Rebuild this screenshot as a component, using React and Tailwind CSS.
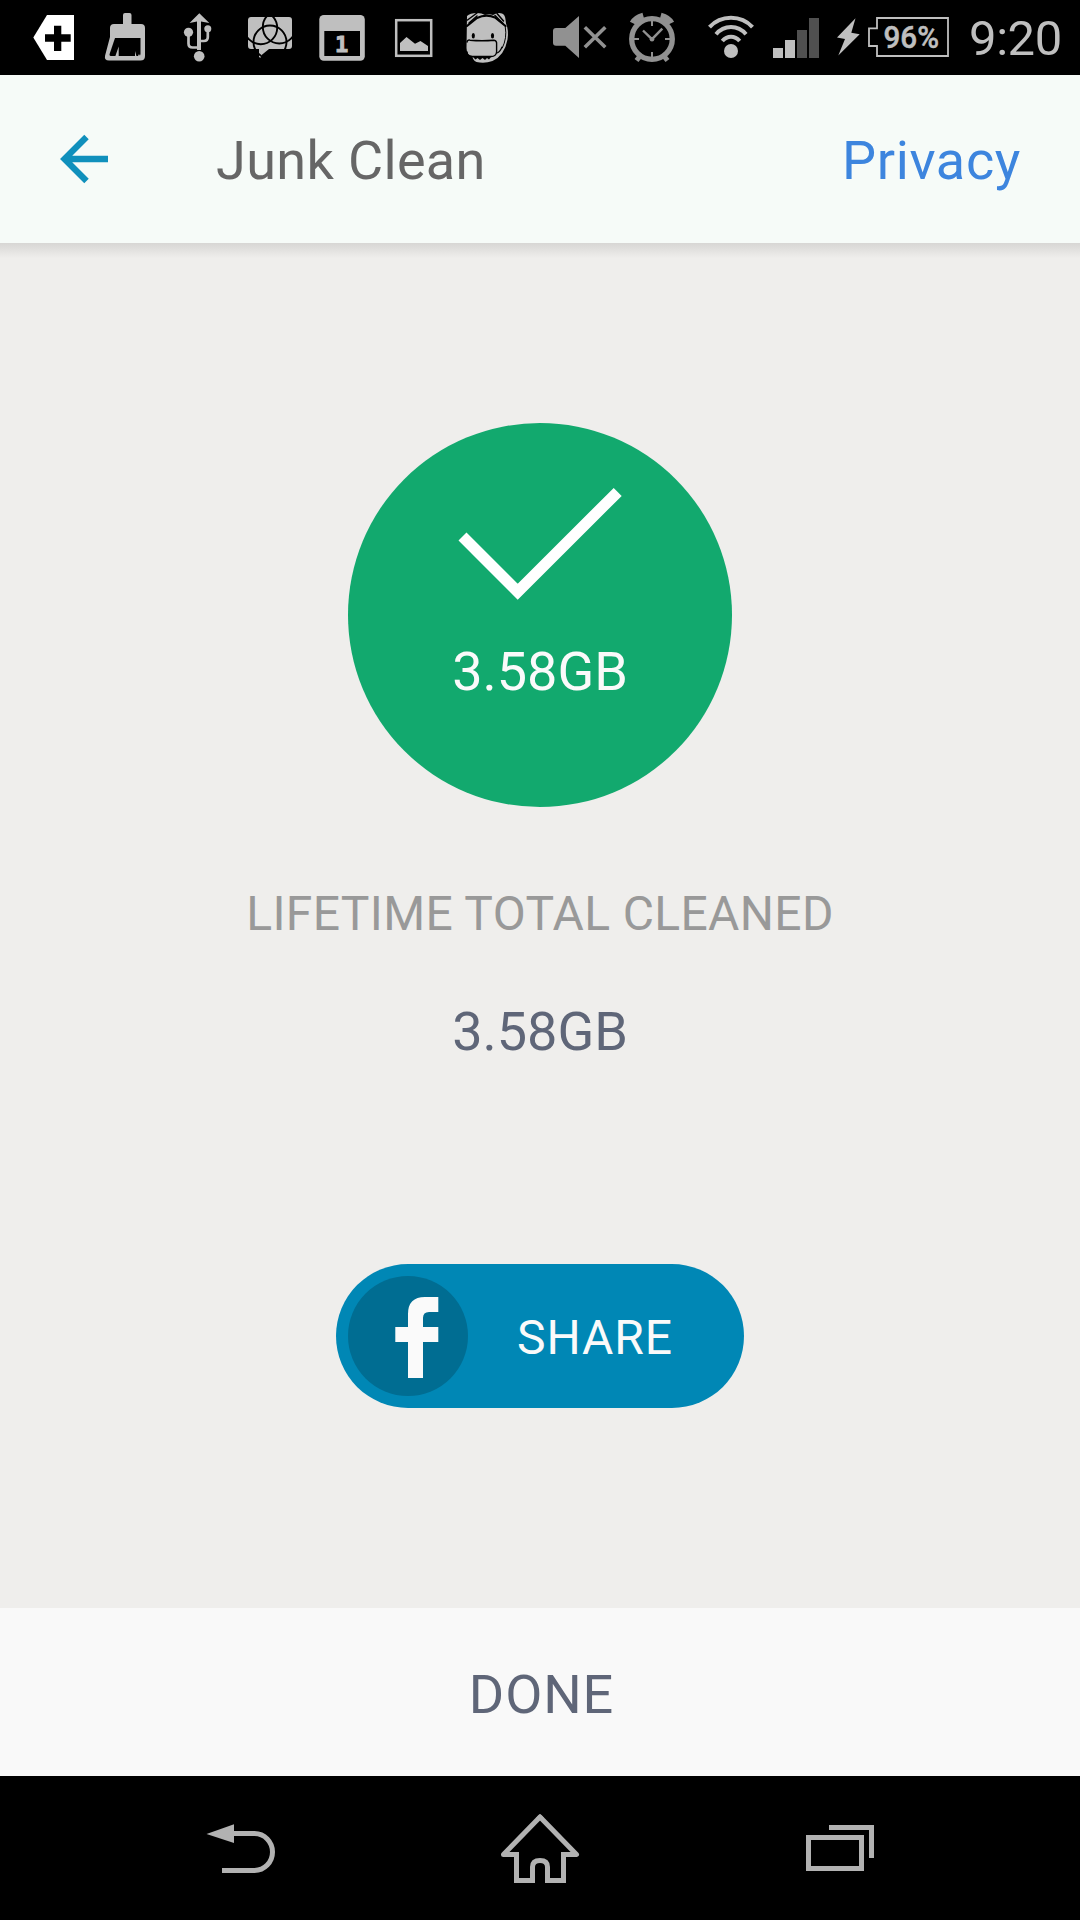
import React from "react";

// A slice of the status bar; drawings inside use bar coordinates.
function Slice({ x, w, children }) {
  return (
    <svg width={w} height="75" viewBox={`${x} 0 ${w} 75`} className="block shrink-0" fill="#bfbfbf">
      {children}
    </svg>
  );
}

function StatusBar() {
  return (
    <div className="flex h-[75px] shrink-0 bg-black text-[#bfbfbf]">
      <Slice x={0} w={90}>
        <path fill="#fff" d="M33.3 37.5 47 15H74V60H47Z" />
        <path fill="#000" d="M54 25.7h7.3v8.6h9.4v7.4h-9.4V51H54v-9.3h-9V34.300h9Z" />
      </Slice>
      <Slice x={90} w={75}>
        <path d="M123 24V15q0-2 2-2h4.500q2 0 2 2v9H141q4 0 4 4v28q0 4.500-4.500 4.500H109q-5 0-3.900-5L110 37v-9q0-4 4-4Z" />
        <path fill="#000" d="M115 38h25.500v16q0 2-2 2h-27q-2.400 0-1.900-2Z" />
        <path d="M118.700 46.500v9.500h-3.300ZM135 51l1.400 5H135ZM139 54l1 2h-2Z" />
      </Slice>
      <Slice x={165} w={65}>
        <path d="M189.500 23 199.300 13.300 209.300 23l-8.300-1.500V50h-4V21.500Z" />
        <circle cx="199.200" cy="56.300" r="5.300" />
        <circle cx="188.500" cy="32.300" r="4.600" />
        <circle cx="207.800" cy="28.700" r="3.500" />
        <path fill="none" stroke="#bfbfbf" strokeWidth="2.700" d="M188.500 34V43.500Q188.500 47.500 192.500 47.500H198M207.800 30V37Q207.800 41 203.800 41H200" />
      </Slice>
      <Slice x={230} w={75}>
        <clipPath id="bubble">
          <path d="M251 17h38q3 0 3 3v26q0 3-3 3H269l-8 6.500-.5 2.500-1.500-1V49h-8q-3 0-3-3V20q0-3 3-3Z" />
        </clipPath>
        <g clipPath="url(#bubble)">
          <rect x="240" y="10" width="60" height="50" />
          <g fill="none" stroke="#000" strokeWidth="1.900">
            <circle cx="260.700" cy="27.700" r="16.500" />
            <circle cx="279.300" cy="27" r="16.500" />
            <circle cx="270" cy="42" r="16.500" />
          </g>
        </g>
      </Slice>
      <Slice x={305} w={75}>
        <rect x="319.300" y="15" width="45.500" height="45.700" rx="4.500" />
        <rect x="324.300" y="31" width="35.700" height="25" fill="#000" />
        <text x="341.500" y="51.900" textAnchor="middle" fontSize="22" fontWeight="700" stroke="#bfbfbf" strokeWidth="1" fontFamily="DejaVu Sans Mono, monospace">1</text>
      </Slice>
      <Slice x={380} w={65}>
        <rect x="396.200" y="20.200" width="35" height="35.600" fill="none" stroke="#bfbfbf" strokeWidth="2.500" />
        <path d="M400 43 406.500 37 415 43.800 420.500 41 428 46V51H400Z" />
      </Slice>
      <Slice x={445} w={85}>
        <path d="M467 16q3-3 10-3 5 0 8 2 4-1.500 8 0 5-3 9-1.500 3 1 3.500 6l.5 4q3 7 1.500 16-3 16-15 21.500-8 3-16 1-4-2-4-6-6-1-6-8Z" />
        <g fill="none" stroke="#000" strokeLinecap="round">
          <path strokeWidth="2.200" d="M467 26 477 18Q486 13.500 495 17.500L505.500 26" />
          <path strokeWidth="1.500" d="M467.500 20 477 13M469 23l8-7M497 13.500 503.500 21M495 15.500l8 8" />
          <path strokeWidth="1.400" d="M467 42q.5-2.500 3-1.800 12 1 24 0 3 .5 2.600 4V52Q496 57 490 56.500H471Q467 56 467 52" />
          <path strokeWidth="1.200" d="M497 53q3-1 5-6" />
          <path strokeWidth="1" d="M505.300 27q2 11-3 21" />
        </g>
        <ellipse cx="473.300" cy="35.800" rx="1.600" ry="2.800" fill="#000" />
        <ellipse cx="492.500" cy="35.800" rx="1.600" ry="2.800" fill="#000" />
        <path fill="#000" d="M473 57h18l-2 2.500-2-1.500-2 2-2.500-2-2.500 2-2.500-2-2 1.500Z" />
      </Slice>
      <Slice x={530} w={85}>
        <path fill="#919191" d="M556 28h9.300L579 16V58L565.300 45.700H556q-3 0-3-3V31q0-3 3-3Z" />
        <path stroke="#919191" strokeWidth="3.600" d="M584.800 27.300 605.300 47.300M605.300 27.300 584.800 47.300" />
      </Slice>
      <Slice x={615} w={80}>
        <g fill="none" stroke="#919191">
          <circle cx="652" cy="39" r="20.300" strokeWidth="5.300" />
          <path strokeWidth="8" d="M633.500 23.500 Q636 18.500 643.500 16.500M670.500 23.500Q668 18.500 660.500 16.500" strokeLinejoin="round" />
          <path strokeWidth="5" d="M640.500 55.500 636.500 60.500M663.500 55.500 667.500 60.500" />
          <path strokeWidth="2" d="M652 21v5M652 52v5M634 39h5M665 39h5" />
          <path strokeWidth="2.400" d="M643 30.500 652 39.200 662.300 28.700" />
        </g>
        <circle cx="652" cy="39.200" r="2.300" fill="#919191" />
      </Slice>
      <Slice x={695} w={70}>
        <circle cx="731" cy="51" r="7" />
        <g fill="none" stroke="#bfbfbf" strokeWidth="4">
          <path d="M709.500 27.200Q718 17.800 731 17.800T752.500 27.200" />
          <path d="M716 34.300Q722 27 731 27T746 34.300" />
          <path d="M722.300 41Q726 36.700 731 36.700T739.700 41" />
        </g>
      </Slice>
      <Slice x={765} w={60}>
        <path d="M773 48h10V58H773ZM785 40h10V58H785Z" />
        <path fill="#505050" d="M797 30h10V58H797ZM809 18h10V58H809Z" />
      </Slice>
      <Slice x={825} w={38}>
        <path d="M855.500 18.300 837 37.500 845 39 838.300 55.500 859.700 34.300 851.300 32.700Z" />
      </Slice>
      <Slice x={863} w={97}>
        <path fill="none" stroke="#bfbfbf" strokeWidth="1.800" d="M877 18H948V56H877V46H869V28.300H877Z" />
        <text x="883.500" y="47.800" fontSize="31" fontWeight="500" stroke="#bfbfbf" strokeWidth="0.500" textLength="55.500" lengthAdjust="spacingAndGlyphs" fontFamily="Roboto, sans-serif">96%</text>
      </Slice>
      <div className="pl-[9px] text-[49px] leading-[78px] tracking-[-0.4px]">9:20</div>
    </div>
  );
}

function Header() {
  return (
    <header className="flex h-[168px] shrink-0 items-center bg-[#f6fbf8]">
      <svg width="60" height="60" viewBox="54 129 60 60" className="ml-[54px] block" fill="none" stroke="#1090bc" strokeWidth="6.300">
        <path d="M108 159H65M86.500 137 64.500 159 86.500 181" />
      </svg>
      <h1 className="ml-[102px] pt-[3px] text-[54px] tracking-[0.35px] text-[#666]">Junk Clean</h1>
      <button className="mr-[59px] ml-auto pt-[3px] text-[54px] tracking-[0.65px] text-[#3d85de]">Privacy</button>
    </header>
  );
}

function NavBar() {
  return (
    <nav className="flex h-[144px] shrink-0 items-center bg-black">
      <svg width="70" height="144" viewBox="205 1776 70 144" className="ml-[205px] block" fill="none" stroke="#b2b2b2" strokeWidth="5">
        <path d="M233 1833.500H254.500a18 18.500 0 0 1 0 37H222" />
        <path d="M206.500 1834 234 1824.200V1843Z" fill="#b2b2b2" stroke="none" />
      </svg>
      <svg width="80" height="144" viewBox="500 1776 80 144" className="ml-[225px] block" fill="none" stroke="#b2b2b2" strokeWidth="5">
        <path d="M516.500 1854.500V1880.500H532.500V1867Q532.500 1860.500 540 1860.500T547.500 1867V1880.500H563.500V1854.500" />
        <path strokeLinejoin="round" d="M519 1854.500H503.500L540 1817 576.500 1854.500H561" />
        <path d="M536 1818 540 1814 544 1818Z" fill="#b2b2b2" stroke="none" />
      </svg>
      <svg width="70" height="144" viewBox="805 1776 70 144" className="ml-[225px] block" fill="none" stroke="#b2b2b2" strokeWidth="5">
        <rect x="808.500" y="1837.500" width="53" height="31" />
        <path d="M829 1827.500H871.500V1858" />
      </svg>
    </nav>
  );
}

export default function App() {
  return (
    <div className="flex h-[1920px] w-[1080px] flex-col overflow-hidden bg-[#efeeec] font-['Roboto',sans-serif]">
      <StatusBar />
      <Header />
      <div className="h-[15px] shrink-0 bg-linear-to-b from-[#d7d6d4] to-[#efeeec]" />
      <main className="flex flex-1 flex-col items-center pt-[165px]">
        <div className="flex size-[384px] shrink-0 flex-col items-center rounded-full bg-[#12a96e]">
          <svg width="180" height="120" viewBox="450 483 180 120" className="mt-[60px] block shrink-0" fill="none" stroke="#fff" strokeWidth="11.300">
            <path d="M462.500 536.500 517.700 591.700 617.700 491.900" />
          </svg>
          <div className="mt-[29px] text-[54px] leading-[80px] text-[#fafafa]">3.58GB</div>
        </div>
        <div className="mt-[77px] text-[48px] leading-[60px] tracking-[0.34px] text-[#999]">LIFETIME TOTAL CLEANED</div>
        <div className="mt-[58px] text-[54px] leading-[60px] text-[#5f6678]">3.58GB</div>
        <button className="mt-[202px] flex h-[144px] w-[408px] shrink-0 items-center rounded-full bg-[#0087b5] pl-[12px]">
          <svg width="120" height="120" viewBox="348 1276 120 120" className="block">
            <circle cx="408" cy="1336" r="60" fill="#006d92" />
            <path fill="#fafafa" d="M438.300 1297V1312H429Q423 1312 423 1318V1327H438.300V1342H423V1378H408V1342H395.300V1327H408V1314Q408 1297 425 1297Z" />
          </svg>
          <span className="ml-[49px] pt-[4px] text-[48px] tracking-[0.9px] text-[#fafafa]">SHARE</span>
        </button>
      </main>
      <button className="h-[168px] shrink-0 bg-[#f9f9f9] pt-[4px] pl-[3px] text-[54px] tracking-[0.9px] text-[#5f6678]">DONE</button>
      <NavBar />
    </div>
  );
}
